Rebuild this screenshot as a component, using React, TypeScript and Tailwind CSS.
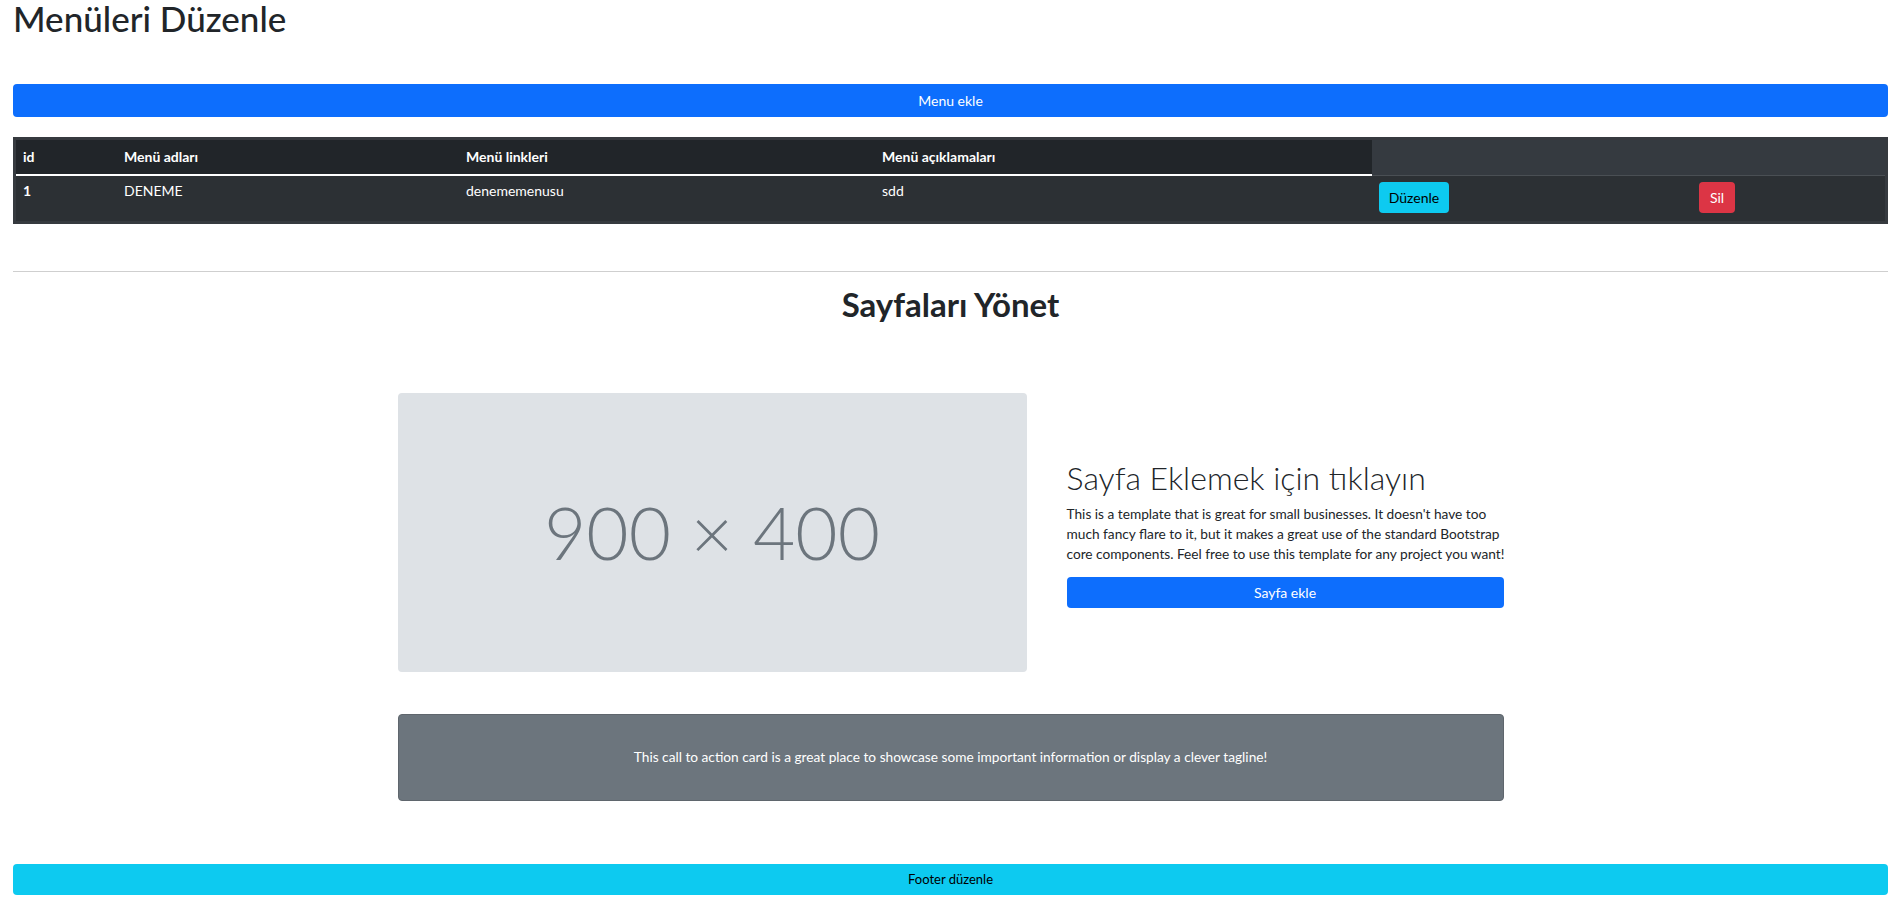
export default function App() {
  const cols = "grid grid-cols-[101px_342px_416px_497px_320px_1fr]";

  return (
    <div className="min-h-[910px] bg-white pl-[13px] pr-[4px] pb-[15px] text-[#212529] [font-family:Lato,'Noto_Sans',sans-serif]">
      <h1 className="text-[35px] font-medium leading-[37px]">Menüleri Düzenle</h1>

      <button className="mt-[47px] flex h-[33px] w-full items-center justify-center rounded-[4px] bg-[#0d6efd] text-[14px] text-white">
        Menu ekle
      </button>

      {/* menu table */}
      <div className="mt-[20px] bg-[#363a3f] p-[3px] text-[14px] text-white">
        <div className={cols}>
          {["id", "Menü adları", "Menü linkleri", "Menü açıklamaları"].map((h) => (
            <div key={h} className="h-[36px] border-b-2 border-white bg-[#212529] px-[7px] pt-[7px] font-bold leading-[20px]">
              {h}
            </div>
          ))}
          <div className="col-span-2 h-[36px] border-b border-[#4a4f54] bg-[#353a40]" />
        </div>
        <div className={`${cols} bg-[#2c3034]`}>
          <div className="h-[45px] px-[7px] pt-[5px] font-bold leading-[20px]">1</div>
          <div className="px-[7px] pt-[5px] leading-[20px]">DENEME</div>
          <div className="px-[7px] pt-[5px] leading-[20px]">denememenusu</div>
          <div className="px-[7px] pt-[5px] leading-[20px]">sdd</div>
          <div className="px-[7px] pt-[6px]">
            <button className="h-[31px] w-[70px] rounded-[4px] bg-[#0dcaf0] text-[14px] text-black">Düzenle</button>
          </div>
          <div className="px-[7px] pt-[6px]">
            <button className="h-[31px] w-[36px] rounded-[4px] bg-[#dc3545] text-[14px] text-white">Sil</button>
          </div>
        </div>
      </div>

      <div className="mt-[47px] h-px bg-[#cfcfcf]" />

      <h2 className="mt-[13px] text-center text-[33px] font-bold leading-[38px]">Sayfaları Yönet</h2>

      <div className="mx-auto w-[1106px]">
        <div className="mt-[70px] flex items-center gap-[40px]">
          <div className="flex h-[279px] w-[629px] shrink-0 items-center justify-center rounded-[4px] bg-[#dee2e6] text-[73px] font-light text-[#6c757d]">
            900 × 400
          </div>
          <div className="w-[437px] shrink-0">
            <h3 className="whitespace-nowrap text-[32px] font-light leading-[40px]">Sayfa Eklemek için tıklayın</h3>
            <p className="mt-[6px] whitespace-nowrap text-[13.7px] leading-[20px]">
              This is a template that is great for small businesses. It doesn't have too
              <br />
              much fancy flare to it, but it makes a great use of the standard Bootstrap
              <br />
              core components. Feel free to use this template for any project you want!
            </p>
            <button className="mt-[13px] flex h-[31px] w-full items-center justify-center rounded-[4px] bg-[#0d6efd] text-[14px] text-white">
              Sayfa ekle
            </button>
          </div>
        </div>

        <div className="mt-[42px] flex h-[87px] items-center justify-center rounded-[4px] border border-[#5f666d] bg-[#6c757d] text-[13.7px] text-white">
          This call to action card is a great place to showcase some important information or display a clever tagline!
        </div>
      </div>

      <button className="mt-[63px] flex h-[31px] w-full items-center justify-center rounded-[4px] bg-[#0dcaf0] text-[13px] text-black">
        Footer düzenle
      </button>
    </div>
  );
}
